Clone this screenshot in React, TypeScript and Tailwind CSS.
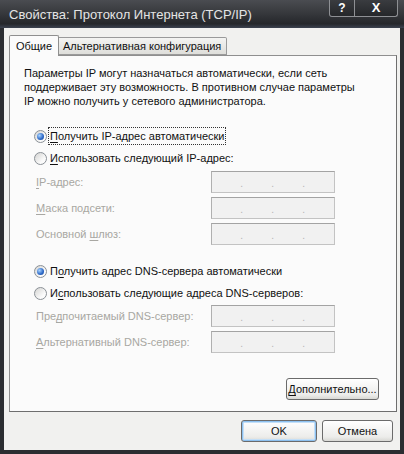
import React from "react";

const U = ({ children }: { children: React.ReactNode }) => (
  <span className="underline underline-offset-[2px] decoration-[1px]">{children}</span>
);

function Radio({ checked }: { checked?: boolean }) {
  return (
    <span className="w-[13px] h-[13px] rounded-full border border-[#8a9096] bg-[linear-gradient(135deg,#d4d4d2,#fbfbfb_70%)] flex items-center justify-center shrink-0">
      {checked && (
        <span className="w-[7px] h-[7px] rounded-full bg-[radial-gradient(circle_at_35%_35%,#a8d4ff,#2a66c6_60%,#184690)]" />
      )}
    </span>
  );
}

function IpField() {
  return (
    <div className="w-[124px] h-[22px] border border-[#c3c3c3] border-t-[#a3a3a3] border-l-[#b0b0b0] bg-[#f1f1f1] flex items-end pb-[3px] text-[#b4b4b4] text-[10px] leading-none">
      <span className="w-[31px] text-right">.</span>
      <span className="w-[31px] text-right">.</span>
      <span className="w-[31px] text-right">.</span>
    </div>
  );
}

function FieldRow({ label }: { label: React.ReactNode }) {
  return (
    <div className="h-[22px] flex items-center">
      <span className="w-[187px] pl-[12px] text-[#a8a7a2]">{label}</span>
      <IpField />
    </div>
  );
}

function RadioRow({ checked, label, focus }: { checked?: boolean; label: React.ReactNode; focus?: boolean }) {
  return (
    <div className="h-[22px] flex items-center pl-[10px]">
      <Radio checked={checked} />
      <span className={"ml-[2px] px-[1px] " + (focus ? "outline outline-1 outline-dotted outline-[#333]" : "")}>{label}</span>
    </div>
  );
}

function Btn({ children, w, def }: { children: React.ReactNode; w: string; def?: boolean }) {
  return (
    <div
      className={
        "h-[22px] rounded-[3px] border border-[#6b6b6b] bg-[linear-gradient(#ffffff,#ececea_80%,#d8d8d4)] flex items-center justify-center text-[#111] " +
        w +
        (def ? " shadow-[inset_0_0_0_1px_#8cc0ef,inset_0_0_0_2px_#c4dff7]" : "")
      }
    >
      {children}
    </div>
  );
}

export default function App() {
  return (
    <div
      className="w-[404px] h-[454px] bg-[#2b2d31] flex flex-col text-[11px] text-[#111]"
      style={{ fontFamily: '"Liberation Sans", Arial, sans-serif' }}
    >
      {/* Title bar */}
      <div className="h-[28px] shrink-0 bg-[linear-gradient(#4a4c51,#35373b_50%,#25272b_85%,#3c4250)] flex items-start relative">
        <span className="pl-[9px] pt-[7px] text-[13px] text-[#e4e4e4] leading-[15px]">
          Свойства: Протокол Интернета (TCP/IP)
        </span>
        <div className="ml-auto mr-[6px] flex h-[17px] border border-t-0 border-[#8e9094] rounded-b-[3px] bg-[linear-gradient(#3a3c40,#25272a)]">
          <div className="w-[25px] flex items-center justify-center text-white font-bold text-[12px] border-r border-[#8e9094]">?</div>
          <div className="w-[42px] flex items-center justify-center text-white font-bold text-[13px]">X</div>
        </div>
      </div>

      {/* Body */}
      <div className="flex-1 mx-[4px] mb-[4px] bg-[#f1f1ef] flex flex-col pl-[5px] pt-[8px]">
        {/* Tabs */}
        <div className="h-[20px] flex items-end relative z-10">
          <div className="h-[21px] w-[50px] bg-[#fbfbfb] border border-b-0 border-[#8f8f8f] rounded-t-[2px] flex items-center justify-center">
            Общие
          </div>
          <div className="h-[18px] w-[168px] mb-[1px] bg-[linear-gradient(#f4f4f2,#dededa)] border border-l-0 border-[#9a9a9a] rounded-tr-[2px] flex items-center pl-[4px]">
            Альтернативная конфигурация
          </div>
        </div>

        {/* Panel */}
        <div className="w-[388px] h-[357px] -mt-[1px] bg-[#fbfbfb] border border-[#8f8f8f] border-r-[#6e6e6e] border-b-[#6e6e6e] flex flex-col pl-[14px] pt-[10px]">
          <p className="leading-[14px]">
            Параметры IP могут назначаться автоматически, если сеть
            <br />
            поддерживает эту возможность. В противном случае параметры
            <br />
            IP можно получить у сетевого администратора.
          </p>

          <div className="mt-[17px] flex flex-col">
            <RadioRow
              checked
              focus
              label={
                <>
                  <U>П</U>олучить IP-адрес автоматически
                </>
              }
            />
            <RadioRow
              label={
                <>
                  <U>И</U>спользовать следующий IP-адрес:
                </>
              }
            />
          </div>

          <div className="mt-[2px] flex flex-col gap-[4px]">
            <FieldRow
              label={
                <>
                  <U>I</U>P-адрес:
                </>
              }
            />
            <FieldRow
              label={
                <>
                  <U>М</U>аска подсети:
                </>
              }
            />
            <FieldRow
              label={
                <>
                  Основной <U>ш</U>люз:
                </>
              }
            />
          </div>

          <div className="mt-[15px] flex flex-col">
            <RadioRow
              checked
              label={
                <>
                  П<U>о</U>лучить адрес DNS-сервера автоматически
                </>
              }
            />
            <RadioRow
              label={
                <>
                  И<U>с</U>пользовать следующие адреса DNS-серверов:
                </>
              }
            />
          </div>

          <div className="mt-[1px] flex flex-col gap-[4px]">
            <FieldRow
              label={
                <>
                  Пре<U>д</U>почитаемый DNS-сервер:
                </>
              }
            />
            <FieldRow
              label={
                <>
                  <U>А</U>льтернативный DNS-сервер:
                </>
              }
            />
          </div>

          <div className="mt-[25px] flex pl-[262px]">
            <Btn w="w-[93px]">
              <span>
                <U>Д</U>ополнительно...
              </span>
            </Btn>
          </div>
        </div>

        {/* Bottom buttons */}
        <div className="mt-[8px] flex justify-end gap-[5px] pr-[7px]">
          <Btn w="w-[76px]" def>
            OK
          </Btn>
          <Btn w="w-[71px]">Отмена</Btn>
        </div>
      </div>
    </div>
  );
}
